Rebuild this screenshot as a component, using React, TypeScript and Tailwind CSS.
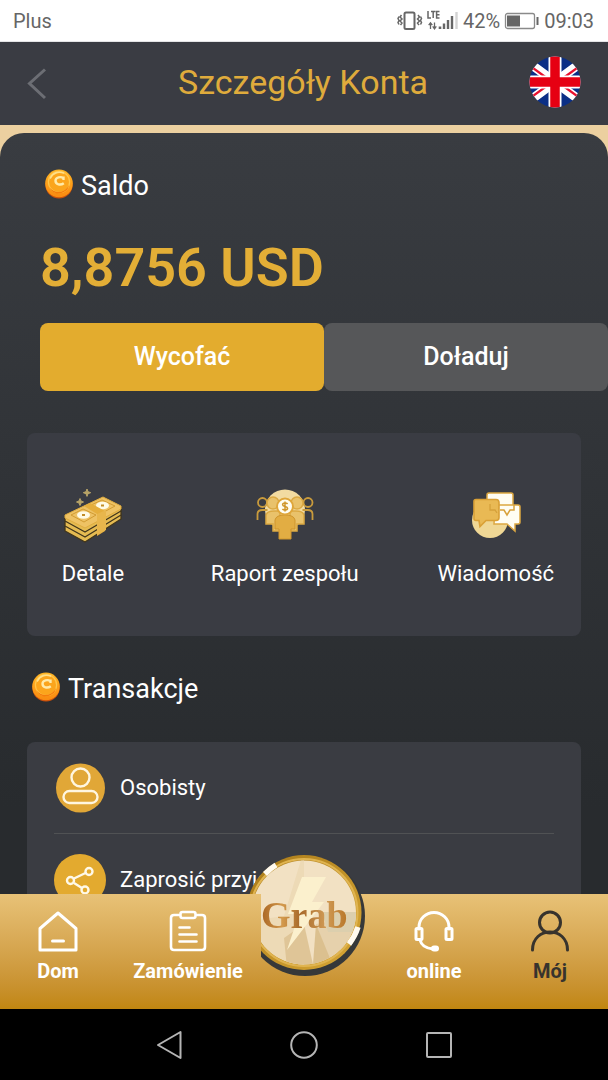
import type { ReactNode } from "react";

function Coin({ id }: { id: string }) {
  return (
    <svg viewBox="0 0 28 30" className="mb-1 h-[30px] w-7 shrink-0" aria-hidden="true">
      <defs>
        <linearGradient id={id} x1="0" y1="0" x2="0" y2="1">
          <stop offset="0" stopColor="#ffb524" />
          <stop offset="1" stopColor="#f98a10" />
        </linearGradient>
      </defs>
      <circle cx="14" cy="16" r="13.600" fill="#c9500c" />
      <circle cx="14" cy="14.400" r="13.800" fill={`url(#${id})`} />
      <circle cx="14" cy="13" r="10.600" fill="#fba51c" stroke="#ffc64b" strokeWidth="1.200" />
      <path d="M4 17c3 7 15 9 20-1-1 9-16 13-20 1Z" fill="#f47d0c" />
      <path d="M5.500 9c2-5 8-7 13-5" fill="none" stroke="#ffe08a" strokeWidth="1.600" strokeLinecap="round" />
      <path d="M18.500 9.200c-2.600-2-8-1.200-8 2.600s5 4.800 8.300 2.400M18.500 7.500v3.500" fill="none" stroke="#ffeaa8" strokeWidth="2.400" />
    </svg>
  );
}

function UkFlag() {
  return (
    <svg viewBox="0 0 52 52" className="mb-1 size-[52px]" aria-hidden="true">
      <defs>
        <clipPath id="flag-round">
          <circle cx="26" cy="26" r="25.500" />
        </clipPath>
      </defs>
      <g clipPath="url(#flag-round)">
        <path d="M0 0h52v52H0z" fill="#0b2f86" />
        <path d="M-4 4 56 48M56 4-4 48" stroke="#fff" strokeWidth="9" />
        <path d="M-5 5.500 26 28M57 46.500 26 24M57 5.500 26 28M-5 46.500 26 24" stroke="#e8112d" strokeWidth="2.400" />
        <path d="M26 0v52M0 26h52" stroke="#fff" strokeWidth="13" />
        <path d="M26 0v52M0 26h52" stroke="#e60012" strokeWidth="9.500" />
      </g>
    </svg>
  );
}

function StatusIcons() {
  return (
    <svg viewBox="0 0 62 24" className="h-6 w-[62px]" aria-hidden="true">
      <rect x="7.500" y="3.500" width="10" height="16.500" rx="1.500" fill="none" stroke="#666" strokeWidth="2" />
      <path d="m4.500 6-1.500 2 2 2-2 2 2 2-1.500 2M2 7.500l-1 2 1 2-1 2 1 2M21 6l1.500 2-2 2 2 2-2 2 1.500 2M23.500 7.500l1 2-1 2 1 2-1 2" fill="none" stroke="#666" strokeWidth="1.500" />
      <path d="M31 2v7h3M34 2.600h4.500M36.200 2.600V9M42.500 2.600H39.600V9h2.900M39.600 5.800h2.900" fill="none" stroke="#666" strokeWidth="1.500" />
      <path d="M33.500 14v6m-1.800-3.800 1.800-2.400 1.800 2.400M37.500 13.500v6m-1.800-2.200 1.800 2.500 1.800-2.500" fill="none" stroke="#666" strokeWidth="1.300" />
      <path d="M43 17.500V20" stroke="#666" strokeWidth="2.600" />
      <path d="M47 14.500V20M51 11V20M55 7V20" stroke="#666" strokeWidth="2.400" />
      <path d="M59.500 3V20" stroke="#d3d3d3" strokeWidth="2.400" />
    </svg>
  );
}

function Battery() {
  return (
    <svg viewBox="0 0 36 18" className="h-[18px] w-9" aria-hidden="true">
      <rect x="1.500" y="1.500" width="29" height="15" rx="2" fill="none" stroke="#8a8a8a" strokeWidth="1.300" />
      <path d="M3 3.500h13v11H3z" fill="#666" />
      <path d="M33.500 5v8" stroke="#666" strokeWidth="2" />
    </svg>
  );
}

function MoneyIcon() {
  return (
    <svg viewBox="0 0 60 56" className="h-14 w-[60px]" aria-hidden="true">
      <path d="m24 2 1 2.700 2.700 1-2.700 1-1 2.700-1-2.700-2.700-1 2.700-1ZM17 11.500l1 2.500 2.500 1-2.500 1-1 2.500-1-2.500-2.500-1 2.500-1Z" fill="#b9a568" stroke="#b9a568" />
      <g fill="#e5bb52" stroke="#40351c" strokeWidth="1.300" strokeLinejoin="round">
        <path d="m2 39 38-20 18 9v4L22 55 2 44Z" />
        <path d="m2 35 38-20 18 9v4L22 50 2 39Z" />
        <path d="m2 31 38-20 18 9v4L22 45 2 34Z" />
      </g>
      <path d="m2 28 38-18 18 9v3L22 41 2 31Z" fill="#eec264" stroke="#e0ad3f" />
      <path d="m8 28 12-6 13 6-12 7ZM28 18l11-5 13 6-11 6Z" fill="none" stroke="#d19b32" />
      <ellipse cx="20.500" cy="28" rx="6.500" ry="3.800" fill="#fffbe6" />
      <ellipse cx="39.500" cy="18.500" rx="6.500" ry="3.800" fill="#fffbe6" />
      <path d="M19 28h3M38 18.500h3" stroke="#c28d27" strokeWidth="1.800" />
      <path d="m21 19 6-3 15 8v20l-8 5V27Z" fill="#e5ae3c" />
      <path d="M34 27v21l9-5V23Z" fill="#e8b64c" />
    </svg>
  );
}

function TeamIcon() {
  return (
    <svg viewBox="0 0 60 56" className="h-14 w-[60px]" aria-hidden="true">
      <circle cx="30" cy="22.500" r="20" fill="#f2dba1" />
      <g fill="none" stroke="#c99b3c" strokeWidth="1.800">
        <circle cx="7.500" cy="15.500" r="4.500" />
        <circle cx="53" cy="15.500" r="4.500" />
        <path d="M2.500 33v-6q0-4 5-4h5M57.500 33v-6q0-4-5-4h-5" />
      </g>
      <g fill="#e9c26b" stroke="#dba943" strokeWidth="1.500">
        <circle cx="18" cy="16" r="6" />
        <circle cx="42" cy="16" r="6" />
        <path d="M11 37V28q1-4 8-4h6v20h-7v-7ZM49 37V28q-1-4-8-4h-6v20h7v-7Z" />
      </g>
      <path d="M20 42V33q1-5 10-5t10 5v9h-4v10H24V42Z" fill="#e2ad43" stroke="#cf952d" />
      <circle cx="30" cy="19.500" r="8" fill="#fffdf0" stroke="#dfa63a" strokeWidth="2" />
      <path d="M32.600 17c-1-1.300-5-1.300-5 .7s5 1.500 5 3.600-4 2-5.200.6M30 14.500v10" fill="none" stroke="#d0972b" strokeWidth="1.500" />
    </svg>
  );
}

function MessageIcon() {
  return (
    <svg viewBox="0 0 60 56" className="h-14 w-[60px]" aria-hidden="true">
      <circle cx="24" cy="33" r="18" fill="#efd795" />
      <path d="M23 6h22q2 0 2 2V24H21V8q0-2 2-2Z" fill="#fffdf3" stroke="#dda842" strokeWidth="1.500" />
      <path d="M29 18h23q2 0 2 2V35q0 2-2 2h-3v7l-8-7H28Z" fill="#fffdf3" stroke="#dda842" strokeWidth="1.500" />
      <path d="M34 23h4l3 5 3-5h4v-5" fill="none" stroke="#d8a13b" strokeWidth="1.500" />
      <path d="M10 12.500h20q3 0 3 3v15q0 3-3 3H20l-6 6-1-6h-3q-2 0-2-2V14.500q0-2 2-2Z" fill="#e9b954" stroke="#d9a036" strokeWidth="1.600" />
      <path d="M24 17v6h5l2 3" fill="none" stroke="#d5a03a" strokeWidth="1.300" />
    </svg>
  );
}

function PersonalIcon() {
  return (
    <svg viewBox="0 0 52 52" className="size-[52px]" fill="none" stroke="#fff6e0" strokeWidth="2.400" aria-hidden="true">
      <circle cx="26.500" cy="26" r="24.500" fill="#e1a737" stroke="none" />
      <circle cx="26.500" cy="15.500" r="9" />
      <rect x="9.500" y="29" width="34" height="12" rx="6" />
    </svg>
  );
}

function ShareIcon() {
  return (
    <svg viewBox="0 0 52 52" className="size-[52px]" fill="none" stroke="#fff9e8" strokeWidth="2.400" aria-hidden="true">
      <circle cx="26" cy="26" r="26" fill="#e3aa2f" stroke="none" />
      <path d="m20 24.500 11.500-5.500M20 29l8 5" />
      <circle cx="16.500" cy="26.500" r="3.500" />
      <circle cx="35" cy="17.500" r="3.500" />
      <circle cx="31" cy="36" r="3.500" />
    </svg>
  );
}

function NavIcon({ children }: { children: ReactNode }) {
  return (
    <svg viewBox="0 0 40 42" className="h-[42px] w-10" fill="none" stroke="currentColor" strokeWidth="3" strokeLinecap="round" strokeLinejoin="round" aria-hidden="true">
      {children}
    </svg>
  );
}

// The dial is cut off straight on its left side, but only below the bar's top edge.
function GrabDial() {
  return (
    <svg viewBox="0 0 128 128" className="absolute -top-11 -left-4 size-32" role="img" aria-label="Grab">
      <defs>
        <linearGradient id="dial-rim" x1="0" y1="0" x2="1" y2="1">
          <stop offset="0" stopColor="#a97a18" />
          <stop offset="1" stopColor="#d9a836" />
        </linearGradient>
        <linearGradient id="dial-text" x1="0" y1="0" x2="1" y2="0">
          <stop offset="0" stopColor="#a96523" />
          <stop offset=".25" stopColor="#d3994c" />
          <stop offset=".45" stopColor="#a86a2a" />
          <stop offset=".75" stopColor="#d09a55" />
          <stop offset="1" stopColor="#b87628" />
        </linearGradient>
        <clipPath id="dial-cut">
          <path d="M0 0h128v128H17V44H0Z" />
        </clipPath>
        <clipPath id="dial-face">
          <circle cx="60" cy="62.500" r="52" />
        </clipPath>
      </defs>
      <g clipPath="url(#dial-cut)">
        <circle cx="61" cy="66" r="60" fill="#363839" />
        <circle cx="60" cy="62.500" r="57.500" fill="url(#dial-rim)" />
        <circle cx="60" cy="62.500" r="53.500" fill="none" stroke="#e0b450" strokeWidth="2" />
        {/* glints on the rim */}
        <path d="M21 24a54.700 54.700 0 0 1 11-9M114 77a54.700 54.700 0 0 1-9 17" fill="none" stroke="#fffaf0" strokeWidth="5.500" />
        <g clipPath="url(#dial-face)">
          <path d="M0 0h128v128H0z" fill="#f2e1c3" />
          <path d="M60 0 40 66 0 72v60h60Z" fill="#eddab6" />
          <path d="m72 74 56-10v64H92Z" fill="#e6d1ac" />
          <path d="m60 74 12 54H44l-4-40Z" fill="#dfc597" />
          <path d="m72 74 22 54H68Z" fill="#dbc08f" />
          <path d="M78 62h50v20H84Z" fill="#dccfae" />
          <path d="M58 27h24L68 52h12L43 100l12-36H44Z" fill="#fbf0cd" />
        </g>
        <text x="17" y="78" fontSize="38" fontWeight="700" fill="url(#dial-text)" className="font-['Liberation_Serif',serif]">
          Grab
        </text>
      </g>
    </svg>
  );
}

const features = [
  { label: "Detale", icon: <MoneyIcon /> },
  { label: "Raport zespołu", icon: <TeamIcon /> },
  { label: "Wiadomość", icon: <MessageIcon /> },
];

const transactions = [
  { label: "Osobisty", icon: <PersonalIcon /> },
  { label: "Zaprosić przyjaciół", icon: <ShareIcon /> },
];

const navLink = "flex flex-col items-center gap-[5px] pt-4 text-[20px] leading-7 font-bold";

export default function App() {
  return (
    <div className="flex h-screen flex-col overflow-hidden bg-[#282c2f] font-[Roboto,sans-serif] text-white">
      <div className="flex h-[42px] shrink-0 items-center justify-between border-b border-[#e4e4e6] bg-white pr-[14px] pl-[13px] text-[20px] text-[#666]">
        <span>Plus</span>
        <div className="flex items-center gap-1">
          <StatusIcons />
          <span>42%</span>
          <Battery />
          <span>09:03</span>
        </div>
      </div>

      <header className="grid h-[83px] shrink-0 grid-cols-[1fr_auto_1fr] items-center bg-[#3a3c43] pr-[27px] pl-[25px]">
        <button aria-label="Wstecz" className="justify-self-start">
          <svg viewBox="0 0 24 32" className="h-8 w-6" fill="none" stroke="#6c6e74" strokeWidth="3" aria-hidden="true">
            <path d="M20 1.500 4.500 15.500 20 30" />
          </svg>
        </button>
        <h1 className="pb-1 text-[34px] leading-10 text-[#dfab3c]">Szczegóły Konta</h1>
        <button aria-label="English" className="justify-self-end">
          <UkFlag />
        </button>
      </header>

      <main className="min-h-0 flex-1 overflow-y-auto bg-[#ecd0a0] pt-2 [scrollbar-width:none]">
        <div className="min-h-full rounded-t-[24px] bg-linear-to-b from-[#393c41] to-[#282b2e] to-85% pt-[37px]">
          <h2 className="flex h-8 items-center gap-2 pl-[45px] text-[27px] leading-8">
            <Coin id="coin-balance" />
            Saldo
          </h2>
          <p className="mt-[34px] pl-10 text-[54px] leading-16 font-semibold text-[#e3ae36]">8,8756 USD</p>

          <div className="mt-[23px] grid grid-cols-2 pl-10 text-[25px] font-medium">
            <button className="h-[68px] rounded-lg bg-[#e3ac2e]">Wycofać</button>
            <button className="h-[68px] rounded-lg bg-[#565759]">Doładuj</button>
          </div>

          <div className="mx-[27px] mt-[42px] flex justify-between rounded-lg bg-[#3a3c43] px-[27px] pt-[54px] pb-[48px]">
            {features.map((feature) => (
              <a key={feature.label} href="#" className="flex min-w-[78px] flex-col items-center gap-[17px] text-[22px] leading-7">
                {feature.icon}
                {feature.label}
              </a>
            ))}
          </div>

          <h2 className="mt-[37px] flex h-8 items-center gap-2 pl-8 text-[27px] leading-8">
            <Coin id="coin-transactions" />
            Transakcje
          </h2>

          <ul className="mx-[27px] mt-[37px] rounded-t-lg bg-[#3a3c42] px-[27px]">
            {transactions.map((item) => (
              <li key={item.label} className="border-b border-[#505254]">
                <a href="#" className="flex h-[91px] items-center gap-[14px] text-[22px]">
                  {item.icon}
                  {item.label}
                </a>
              </li>
            ))}
          </ul>
        </div>
      </main>

      <nav className="relative z-10 grid h-[115px] shrink-0 grid-cols-[116fr_144fr_116fr_116fr_116fr] bg-linear-to-b from-[#e8c277] to-[#c1860f]">
        <a href="#" className={navLink}>
          <NavIcon>
            <path d="M2 18.500 20 3l18 15.500V40H2ZM14.500 31h11" />
          </NavIcon>
          Dom
        </a>
        <a href="#" className={navLink}>
          <NavIcon>
            <g strokeWidth="2.600">
              <path d="M11 5H6q-3 0-3 3v29q0 3 3 3h28q3 0 3-3V8q0-3-3-3h-5M11.500 17.500h10M11.500 24.500h17M11.500 31.500h17" />
              <rect x="12.500" y="2" width="15" height="6" rx="2" />
            </g>
          </NavIcon>
          Zamówienie
        </a>
        <a href="#" className="relative">
          <GrabDial />
        </a>
        <a href="#" className={navLink}>
          <NavIcon>
            <path d="M5 19v-2a15 14.500 0 0 1 30 0v2M6 30q2 8 13 9" />
            <rect x="2" y="18.500" width="6" height="11" rx="1" />
            <rect x="32" y="18.500" width="6" height="11" rx="1" />
            <path d="M20 38.500h2" strokeWidth="6" />
          </NavIcon>
          online
        </a>
        <a href="#" className={`${navLink} text-[#37332d]`}>
          <NavIcon>
            <circle cx="20" cy="12.500" r="10.500" />
            <path d="M2.500 40c0-24 35-24 35 0" />
          </NavIcon>
          Mój
        </a>
      </nav>

      <div className="flex h-[71px] shrink-0 items-center justify-center gap-[107px] bg-black">
        <button aria-label="Back">
          <svg viewBox="0 0 28 30" className="h-[30px] w-7" fill="none" stroke="#b5b5b5" strokeWidth="2" strokeLinejoin="round">
            <path d="M25.500 2v26L3 15Z" />
          </svg>
        </button>
        <button aria-label="Home">
          <svg viewBox="0 0 28 28" className="size-7" fill="none" stroke="#b5b5b5" strokeWidth="2">
            <circle cx="14" cy="14" r="12.800" />
          </svg>
        </button>
        <button aria-label="Recent apps">
          <svg viewBox="0 0 28 28" className="size-7" fill="none" stroke="#b5b5b5" strokeWidth="2">
            <rect x="2" y="2" width="24" height="24" rx="1" />
          </svg>
        </button>
      </div>
    </div>
  );
}
